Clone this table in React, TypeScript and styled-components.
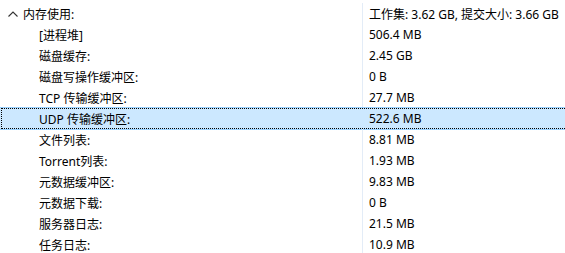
import React from 'react';
import styled, { createGlobalStyle, css } from 'styled-components';

interface Item {
  label: string;
  value: string;
  selected?: boolean;
}

const items: Item[] = [
  { label: '[进程堆]', value: '506.4 MB' },
  { label: '磁盘缓存:', value: '2.45 GB' },
  { label: '磁盘写操作缓冲区:', value: '0 B' },
  { label: 'TCP 传输缓冲区:', value: '27.7 MB' },
  { label: 'UDP 传输缓冲区:', value: '522.6 MB', selected: true },
  { label: '文件列表:', value: '8.81 MB' },
  { label: 'Torrent列表:', value: '1.93 MB' },
  { label: '元数据缓冲区:', value: '9.83 MB' },
  { label: '元数据下载:', value: '0 B' },
  { label: '服务器日志:', value: '21.5 MB' },
  { label: '任务日志:', value: '10.9 MB' },
];

export default function App(): JSX.Element {
  return (
    <>
      <GlobalStyle />
      <Tree>
        <Row>
          <Label indent={8}>
            <Chevron viewBox='0 0 10 6' width={10} height={6}>
              <path d='M0.5 5.5 L5 1 L9.5 5.5' fill='none' stroke='#333' strokeWidth='1.1' />
            </Chevron>
            内存使用:
          </Label>
          <Value>工作集: 3.62 GB, 提交大小: 3.66 GB</Value>
        </Row>
        {items.map((it) => (
          <Row key={it.label} selected={it.selected}>
            <Label indent={39}>{it.label}</Label>
            <Value selected={it.selected}>{it.value}</Value>
          </Row>
        ))}
      </Tree>
    </>
  );
}

const GlobalStyle = createGlobalStyle`
  body {
    margin: 0;
    background: #fff;
    font-family: "Segoe UI", "Noto Sans", "Noto Sans CJK SC", sans-serif;
    font-size: 12px;
    color: #000;
  }
`;

const Tree = styled.div`
  display: flex;
  flex-direction: column;
  padding-top: 3px;
  width: 565px;
  height: 253px;
  overflow: hidden;
`;

const Row = styled.div<{ selected?: boolean }>`
  display: flex;
  height: 21px;
  box-sizing: border-box;
  position: relative;
  ${({ selected }) => selected && css`
    background: #cce8ff;
    border-top: 1px solid #99d1ff;
    border-bottom: 1px solid #99d1ff;
    margin: -1px 0;
    height: 23px;
    &::after {
      content: '';
      position: absolute;
      left: 1px;
      right: 0;
      top: 0;
      bottom: 0;
      border: 1px dotted #000;
      border-right: none;
    }
  `}
`;

const Label = styled.div<{ indent: number }>`
  width: 362px;
  display: flex;
  align-items: center;
  padding-left: ${(p) => p.indent}px;
  box-sizing: border-box;
  white-space: nowrap;
`;

const Chevron = styled.svg`
  margin-right: 5px;
  margin-top: 1px;
`;

const Value = styled.div<{ selected?: boolean }>`
  flex: 1;
  display: flex;
  align-items: center;
  padding-left: 6px;
  border-left: 1px solid ${(p) => (p.selected ? 'transparent' : '#e3ecf7')};
  white-space: nowrap;
`;
